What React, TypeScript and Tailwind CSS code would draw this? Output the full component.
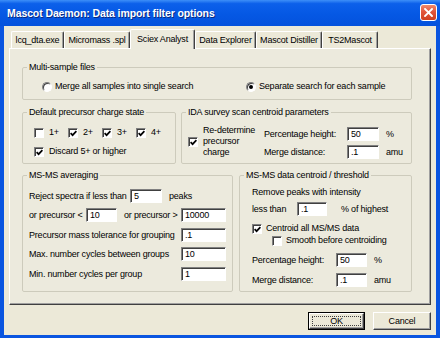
import React from "react";

const sunken =
  "border border-t-[#808080] border-l-[#808080] border-r-[#ffffff] border-b-[#ffffff] shadow-[inset_1px_1px_0_#404040]";

function CheckBox({ checked }: { checked?: boolean }) {
  return (
    <span className={`flex w-[10px] h-[10px] shrink-0 bg-white items-center justify-center ${sunken}`}>
      {checked && (
        <svg width="7" height="7" viewBox="0 0 7 7" className="ml-[1px] mt-[1px]">
          <path d="M0.6 3.2 L2.6 5.2 L6.4 1.2" fill="none" stroke="#000" strokeWidth="1.7" />
        </svg>
      )}
    </span>
  );
}

function Radio({ checked }: { checked?: boolean }) {
  return (
    <span className="flex w-[10px] h-[10px] shrink-0 rounded-full bg-white items-center justify-center border border-t-[#808080] border-l-[#808080] border-r-[#ffffff] border-b-[#ffffff] shadow-[inset_1px_1px_0_#404040]">
      {checked && <span className="w-[4px] h-[4px] rounded-full bg-black" />}
    </span>
  );
}

function Field({ value, className }: { value: string; className?: string }) {
  return (
    <div className={`h-[14px] shrink-0 bg-white flex items-center pl-[3px] ${sunken} ${className ?? ""}`}>
      {value}
    </div>
  );
}

function Group({
  title,
  className,
  children,
}: {
  title: string;
  className?: string;
  children: React.ReactNode;
}) {
  return (
    <fieldset className={`border border-[#cdcbbc] rounded-[2px] min-w-0 ${className ?? ""}`}>
      <legend className="ml-[4px] px-[2px] leading-[11px]">{title}</legend>
      {children}
    </fieldset>
  );
}

function Tab({ label, className, active }: { label: string; className: string; active?: boolean }) {
  if (active) {
    return (
      <div
        className={`relative z-10 h-[20px] -mb-[1px] bg-[#eceadd] flex items-center justify-center rounded-t-[2px] border-t border-l border-r border-t-white border-l-white border-r-[#404040] shadow-[inset_-1px_0_0_#a0a0a0] ${className}`}
      >
        {label}
      </div>
    );
  }
  return (
    <div
      className={`h-[17px] flex items-center justify-center rounded-t-[2px] border-t border-l border-r border-t-white border-l-white border-r-[#404040] shadow-[inset_-1px_0_0_#a0a0a0] ${className}`}
    >
      {label}
    </div>
  );
}

export default function App() {
  const charges = [
    { c: "1+", on: false },
    { c: "2+", on: true },
    { c: "3+", on: true },
    { c: "4+", on: true },
  ];

  return (
    <div className="w-[440px] h-[338px] flex flex-col bg-[#0a55e0] font-['Liberation_Sans',Arial,sans-serif] text-[9px] leading-[11px] tracking-[-0.2px] text-black select-none">
      {/* title bar */}
      <div className="h-[26px] shrink-0 flex items-center pl-[7px] pr-[3px] bg-[linear-gradient(to_bottom,#3d8ff8_0%,#0c60ea_14%,#0558e4_55%,#0452dc_100%)]">
        <span className="pt-[1px] text-white font-bold text-[10.5px] tracking-[-0.1px] [text-shadow:1px_1px_0_#0a2a80]">
          Mascot Daemon: Data import filter options
        </span>
        <span className="ml-auto self-start mt-[4px] w-[17px] h-[17px] flex items-center justify-center rounded-[3px] border border-white bg-[linear-gradient(to_bottom,#f08a6c_0%,#e2553b_45%,#d0401f_100%)]">
          <svg width="9" height="9" viewBox="0 0 9 9">
            <path d="M1 1 L8 8 M8 1 L1 8" stroke="#fff" strokeWidth="1.9" strokeLinecap="square" />
          </svg>
        </span>
      </div>

      {/* dialog body */}
      <div className="flex-1 mx-[4px] mb-[3px] bg-[#ece9d8] flex flex-col px-[5px] pt-[3px]">
        <div className="flex items-end h-[19px] pl-[2px]">
          <Tab label="lcq_dta.exe" className="w-[53px]" />
          <Tab label="Micromass .spl" className="w-[66px]" />
          <Tab label="Sciex Analyst" className="w-[65px]" active />
          <Tab label="Data Explorer" className="w-[61px]" />
          <Tab label="Mascot Distiller" className="w-[66px]" />
          <Tab label="TS2Mascot" className="w-[56px]" />
        </div>

        <div className="h-[257px] shrink-0 bg-[#eceadd] border border-t-white border-l-white border-r-[#404040] border-b-[#404040] shadow-[inset_-1px_-1px_0_#a0a0a0] flex flex-col pl-[12px] pt-[13px]">
          <Group title="Multi-sample files" className="w-[390px] h-[38px]">
            <div className="flex items-center mt-[8px] pl-[19px]">
              <label className="flex items-center w-[204px]">
                <Radio />
                <span className="ml-[3px]">Merge all samples into single search</span>
              </label>
              <label className="flex items-center">
                <Radio checked />
                <span className="ml-[3px]">Separate search for each sample</span>
              </label>
            </div>
          </Group>

          <div className="flex mt-[7px] gap-[5px]">
            <Group title="Default precursor charge state" className="w-[154px] h-[57px]">
              <div className="flex items-center mt-[9px] pl-[11px]">
                {charges.map((x) => (
                  <label key={x.c} className="flex items-center w-[34px]">
                    <CheckBox checked={x.on} />
                    <span className="ml-[5px]">{x.c}</span>
                  </label>
                ))}
              </div>
              <label className="flex items-center mt-[8px] pl-[11px]">
                <CheckBox checked />
                <span className="ml-[5px]">Discard 5+ or higher</span>
              </label>
            </Group>

            <Group title="IDA survey scan centroid parameters" className="w-[231px] h-[57px]">
              <div className="flex pl-[6px]">
                <div className="flex items-center w-[76px] mt-[6px]">
                  <CheckBox checked />
                  <span className="ml-[5px]">
                    Re-determine
                    <br />
                    precursor
                    <br />
                    charge
                  </span>
                </div>
                <div className="flex flex-col gap-[4px] mt-[9px]">
                  <div className="flex items-center">
                    <span className="w-[83px]">Percentage height:</span>
                    <Field value="50" className="w-[32px]" />
                    <span className="ml-[7px]">%</span>
                  </div>
                  <div className="flex items-center">
                    <span className="w-[83px]">Merge distance:</span>
                    <Field value=".1" className="w-[32px]" />
                    <span className="ml-[7px]">amu</span>
                  </div>
                </div>
              </div>
            </Group>
          </div>

          <div className="flex mt-[6px] gap-[6px]">
            <Group title="MS-MS averaging" className="w-[211px] h-[122px]">
              <div className="flex flex-col pl-[6px]">
                <div className="flex items-center mt-[8px]">
                  <span className="w-[101px]">Reject spectra if less than</span>
                  <Field value="5" className="w-[32px]" />
                  <span className="ml-[7px]">peaks</span>
                </div>
                <div className="flex items-center mt-[5px]">
                  <span className="w-[57px]">or precursor &lt;</span>
                  <Field value="10" className="w-[31px]" />
                  <span className="ml-[7px] w-[57px]">or precursor &gt;</span>
                  <Field value="10000" className="w-[45px]" />
                </div>
                <div className="flex items-center mt-[6px]">
                  <span className="w-[152px]">Precursor mass tolerance for grouping</span>
                  <Field value=".1" className="w-[45px]" />
                </div>
                <div className="flex items-center mt-[5px]">
                  <span className="w-[152px]">Max. number cycles between groups</span>
                  <Field value="10" className="w-[45px]" />
                </div>
                <div className="flex items-center mt-[6px]">
                  <span className="w-[152px]">Min. number cycles per group</span>
                  <Field value="1" className="w-[45px]" />
                </div>
              </div>
            </Group>

            <Group title="MS-MS data centroid / threshold" className="w-[173px] h-[122px]">
              <div className="flex flex-col pl-[12px]">
                <span className="mt-[6px]">Remove peaks with intensity</span>
                <div className="flex items-center mt-[4px]">
                  <span className="w-[45px]">less than</span>
                  <Field value=".1" className="w-[30px]" />
                  <span className="ml-[14px]">% of highest</span>
                </div>
                <label className="flex items-center mt-[7px]">
                  <CheckBox checked />
                  <span className="ml-[4px]">Centroid all MS/MS data</span>
                </label>
                <label className="flex items-center mt-[1px] pl-[20px]">
                  <CheckBox />
                  <span className="ml-[4px]">Smooth before centroiding</span>
                </label>
                <div className="flex items-center mt-[7px]">
                  <span className="w-[84px]">Percentage height:</span>
                  <Field value="50" className="w-[31px]" />
                  <span className="ml-[7px]">%</span>
                </div>
                <div className="flex items-center mt-[6px]">
                  <span className="w-[84px]">Merge distance:</span>
                  <Field value=".1" className="w-[31px]" />
                  <span className="ml-[7px]">amu</span>
                </div>
              </div>
            </Group>
          </div>
        </div>

        <div className="flex justify-end gap-[8px] mt-[7px]">
          <div className="w-[57px] h-[18px] border border-black">
            <div className="w-full h-full border border-t-white border-l-white border-r-[#404040] border-b-[#404040] shadow-[inset_-1px_-1px_0_#a0a0a0] p-[2px]">
              <div className="w-full h-full border border-dotted border-[#404040] flex items-center justify-center">
                OK
              </div>
            </div>
          </div>
          <div className="w-[58px] h-[18px] border border-t-white border-l-white border-r-[#404040] border-b-[#404040] shadow-[inset_-1px_-1px_0_#a0a0a0] flex items-center justify-center">
            Cancel
          </div>
        </div>
      </div>
    </div>
  );
}
